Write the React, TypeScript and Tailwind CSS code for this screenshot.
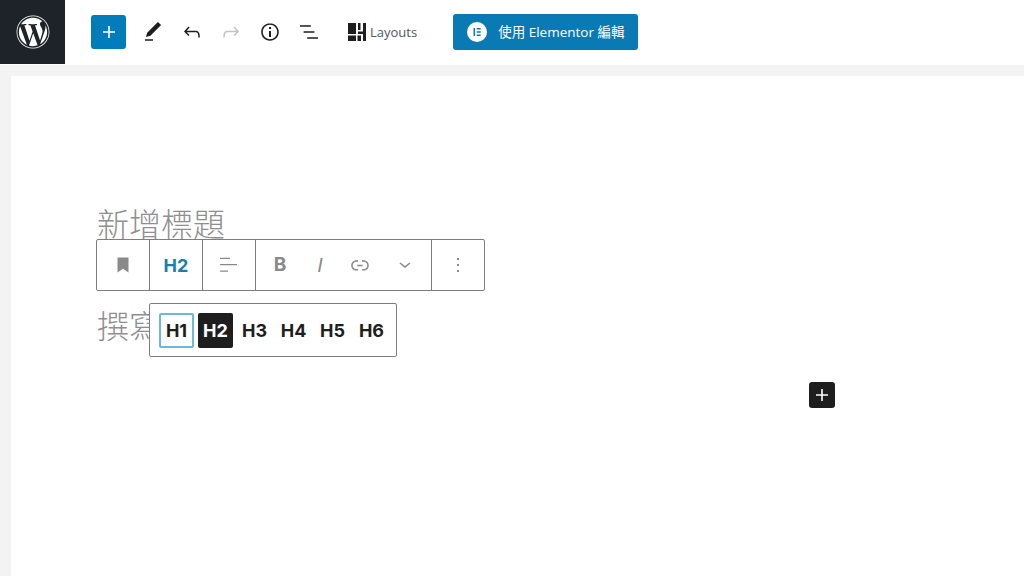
import React from "react";
import { FaWordpress } from "react-icons/fa";

const cjk = '"Open Sans", "Noto Sans CJK TC", sans-serif';
const wide = "Inter, sans-serif";

const Icon = ({ d, className = "" }: { d: string; className?: string }) => (
  <svg viewBox="0 0 24 24" width="24" height="24" fill="currentColor" className={className}>
    <path d={d} />
  </svg>
);

const icons = {
  plus: "M18 11.2h-5.2V6h-1.6v5.2H6v1.6h5.2V18h1.6v-5.2H18z",
  pencil: "M20.1 5.1L16.9 2 6.2 12.7l-1.3 4.4 4.5-1.3L20.1 5.1zM4 20.8h8v-1.5H4v1.5z",
  undo: "M18.3 11.7c-.6-.6-1.4-.9-2.3-.9H6.7l2.9-3.3-1.1-1-4.5 5L8.5 16l1-1-2.7-2.7H16c.5 0 .9.2 1.3.5 1 1 1 3.4 1 4.5v.3h1.5v-.2c0-1.5 0-4.3-1.5-5.7z",
  redo: "M15.6 6.5l-1.1 1 2.9 3.3H8c-.9 0-1.7.3-2.3.9-1.4 1.5-1.4 4.2-1.4 5.6v.2h1.5v-.3c0-1.1 0-3.5 1-4.5.3-.3.7-.5 1.3-.5h9.2L14.5 15l1.1 1.1 4.6-4.6-4.6-5z",
  info: "M12 3.2c-4.8 0-8.8 3.9-8.8 8.8 0 4.8 3.9 8.8 8.8 8.8 4.8 0 8.8-3.9 8.8-8.8 0-4.8-4-8.8-8.8-8.8zm0 16c-4 0-7.2-3.3-7.2-7.2C4.8 8 8 4.8 12 4.8s7.2 3.3 7.2 7.2c0 4-3.2 7.2-7.2 7.2zM11 17h2v-6h-2v6zm0-8h2V7h-2v2z",
  list: "M13.8 5.2H3v1.5h10.8V5.2zm-3.6 12v1.5H21v-1.5H10.2zm7.2-6H6.6v1.5h10.8v-1.5z",
  bookmark: "M6.5 4.5h11v15L12 15.8l-5.5 3.7z",
  align: "M3 4.7h10v1.3H3zM3 11h17v1.3H3zM3 17.5h8v1.3H3z",
  link: "M15.6 7.2H14v1.5h1.6c2 0 3.7 1.7 3.7 3.7s-1.7 3.7-3.7 3.7H14v1.5h1.6c2.8 0 5.2-2.3 5.2-5.2 0-2.9-2.3-5.2-5.2-5.2zM4.7 12.4c0-2 1.7-3.7 3.7-3.7H10V7.2H8.4c-2.9 0-5.2 2.3-5.2 5.2 0 2.9 2.3 5.2 5.2 5.2H10v-1.5H8.4c-2 0-3.7-1.7-3.7-3.7zm4.6.9h5.3v-1.5H9.3v1.5z",
  chevron: "M17.5 10.6L12 15l-5.5-4.4.9-1.2L12 13l4.5-3.6 1 1.2z",
  more: "M13 19h-2v-2h2v2zm0-6h-2v-2h2v2zm0-6h-2V5h2v2z",
};

const LayoutsIcon = () => (
  <svg viewBox="0 0 18 18" width="18" height="18" fill="#1e1e1e">
    <path d="M0 0h8v11H0zM10 0h2.5v7H10zM15 0h3v18h-3zM10 8.5h5v2.5h-5zM0 12.5h8V18H0zM9.5 12.5H13V18H9.5z" />
  </svg>
);

const ElementorIcon = () => (
  <svg viewBox="0 0 20 20" width="20" height="20">
    <circle cx="10" cy="10" r="10" fill="#fff" />
    <path d="M6.5 6h1.6v8H6.5zM9.7 6h4v1.6h-4zM9.7 9.2h4v1.6h-4zM9.7 12.4h4V14h-4z" fill="#0a7ab5" />
  </svg>
);

const Header = () => (
  <header className="flex h-[65px] shrink-0 items-start bg-white">
    <div className="flex h-[64px] w-[65px] items-center justify-center bg-[#1e2229] text-white">
      <FaWordpress size={34} />
    </div>
    <div className="flex h-[64px] items-center">
      <button className="ml-[26px] flex h-[34px] w-[35px] items-center justify-center rounded-[3px] bg-[#007cba] text-white">
        <Icon d={icons.plus} />
      </button>
      <div className="ml-[15px] flex items-center gap-[15px] text-[#1e1e1e]">
        <Icon d={icons.pencil} />
        <Icon d={icons.undo} />
        <Icon d={icons.redo} className="text-[#c4c4c4]" />
        <Icon d={icons.info} />
        <Icon d={icons.list} />
      </div>
      <div className="ml-[27px] flex items-center gap-[4px]">
        <LayoutsIcon />
        <span className="pt-[2px] pr-[1px] text-[13px] text-[#50575e]" style={{ fontFamily: cjk }}>Layouts</span>
      </div>
      <button
        className="ml-[35px] flex h-[36px] w-[185px] items-center rounded-[3px] bg-[#0a7ab5] pl-[14px] text-[13.5px] text-white"
        style={{ fontFamily: cjk }}
      >
        <ElementorIcon />
        <span className="ml-[11px]">使用 Elementor 編輯</span>
      </button>
    </div>
  </header>
);

const ToolCell = ({ children }: { children: React.ReactNode }) => (
  <div className="flex h-full w-[53px] items-center justify-center border-r border-[#7e7e7e]">{children}</div>
);

const BlockToolbar = () => (
  <div className="absolute left-[85px] top-[163px] z-10 flex h-[52px] w-[389px] items-center rounded-xs border border-[#7e7e7e] bg-white text-[#8a8a8a]">
    <ToolCell><Icon d={icons.bookmark} /></ToolCell>
    <ToolCell>
      <span className="text-[18px] font-bold text-[#1a7fae]" style={{ fontFamily: wide }}>H2</span>
    </ToolCell>
    <ToolCell><Icon d={icons.align} /></ToolCell>
    <div className="flex h-full w-[176px] items-center border-r border-[#7e7e7e]">
      <span className="ml-[17px] w-[14px] pt-[1px] text-center text-[19px] font-bold" style={{ fontFamily: wide }}>B</span>
      <span className="ml-[26px] w-[14px] text-center text-[20px] italic" style={{ fontFamily: '"Liberation Sans", sans-serif' }}>I</span>
      <Icon d={icons.link} className="ml-[21px]" />
      <Icon d={icons.chevron} className="ml-[21px]" />
    </div>
    <div className="flex flex-1 items-center justify-center"><Icon d={icons.more} /></div>
  </div>
);

const HeadingPicker = () => (
  <div className="absolute left-[138px] top-[227px] z-20 flex h-[54px] w-[248px] items-start gap-[4px] rounded-xs border border-[#7e7e7e] bg-white pl-[9px] pt-[9px]">
    {["H1", "H2", "H3", "H4", "H5", "H6"].map((h) => (
      <div
        key={h}
        className={
          h === "H1"
            ? "flex h-[35px] w-[35px] items-center justify-center rounded-xs border-2 border-[#6db8dc] text-[18px] font-bold text-[#1e1e1e]"
            : h === "H2"
              ? "flex h-[35px] w-[35px] items-center justify-center rounded-xs bg-[#1e1e1e] text-[18px] font-bold text-white"
              : "flex h-[35px] w-[35px] items-center justify-center text-[18px] font-bold text-[#1e1e1e]"
        }
        style={{ fontFamily: wide }}
      >
        {h}
      </div>
    ))}
  </div>
);

export default function App() {
  return (
    <div className="flex h-[576px] w-[1024px] flex-col overflow-hidden bg-[#f3f3f3]">
      <Header />
      <main className="relative ml-[11px] mt-[11px] flex-1 bg-white pl-[86px] pt-[128px] text-[#8f8f8f]" style={{ fontFamily: cjk }}>
        <h1 className="text-[32px] font-light leading-[40px]">新增標題</h1>
        <p className="mt-[62px] text-[32px] font-light leading-[40px]">撰寫</p>
        <BlockToolbar />
        <HeadingPicker />
        <button className="absolute left-[798px] top-[306px] flex h-[26px] w-[26px] items-center justify-center rounded-[3px] bg-[#1e1e1e] text-white">
          <Icon d={icons.plus} />
        </button>
      </main>
    </div>
  );
}
